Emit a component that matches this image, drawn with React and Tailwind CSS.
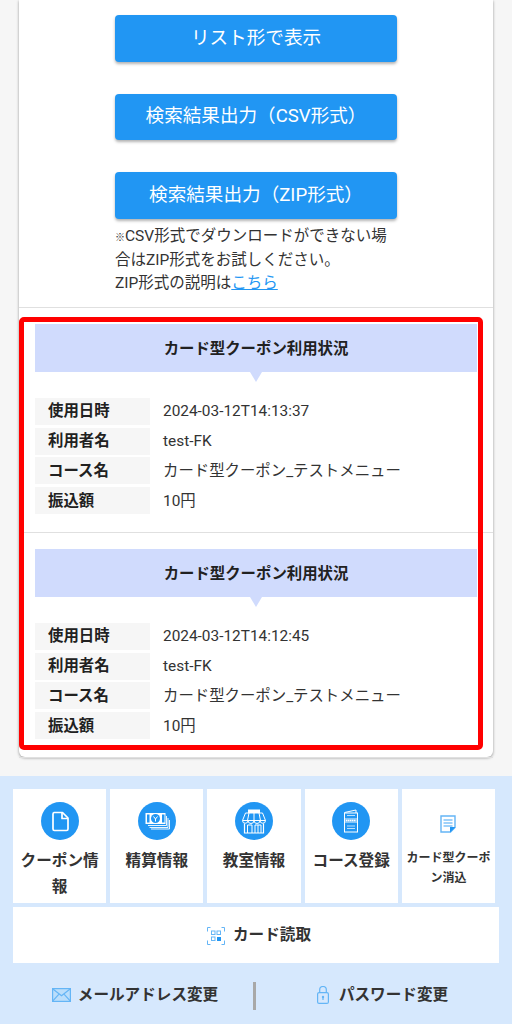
import { Fragment } from "react";

const BUTTONS = ["リスト形で表示", "検索結果出力（CSV形式）", "検索結果出力（ZIP形式）"];

const USAGES = [
  { date: "2024-03-12T14:13:37", user: "test-FK", course: "カード型クーポン_テストメニュー", amount: "10円" },
  { date: "2024-03-12T14:12:45", user: "test-FK", course: "カード型クーポン_テストメニュー", amount: "10円" },
];

function FileIcon() {
  return (
    <svg viewBox="0 0 38 38" className="w-full h-full" fill="none" stroke="#fff" strokeWidth="1.7" strokeLinejoin="round">
      <path d="M13 10.5h8.5l5.5 5.5v11a1.5 1.5 0 0 1-1.5 1.5h-12a1.5 1.5 0 0 1-1.5-1.5V12a1.5 1.5 0 0 1 1.5-1.5z" />
      <path d="M21 10.5v6h6" />
    </svg>
  );
}

function MoneyIcon() {
  return (
    <svg viewBox="0 0 38 38" className="w-full h-full" fill="none" stroke="#fff">
      <rect x="7.5" y="11" width="20" height="11" fill="#fff" stroke="none" />
      <ellipse cx="17.5" cy="16.5" rx="4.5" ry="4.5" fill="#2196f3" stroke="none" />
      <path d="M15.5 14.5l2 2.5 2-2.5M17.5 17v2.5" stroke="#fff" strokeWidth="1" />
      <rect x="9" y="12.5" width="2.5" height="8" fill="#2196f3" stroke="none" />
      <rect x="24" y="12.5" width="2.5" height="8" fill="#2196f3" stroke="none" />
      <path d="M28.5 14v9.5H10M30 16v9.5H11.5M31.5 18v9H13" strokeWidth="0.9" />
    </svg>
  );
}

function ShopIcon() {
  return (
    <svg viewBox="0 0 38 38" className="w-full h-full" fill="none" stroke="#fff" strokeWidth="1">
      <rect x="13" y="7.5" width="12" height="3.5" fill="#fff" stroke="none" />
      <path d="M10.5 11h17l3 7.5h-23z" />
      <path d="M14 11l-1.5 7.5M19 11v7.5M24 11l1.5 7.5" />
      <path d="M7.5 18.5a2.7 2.7 0 0 0 5.5 0 2.8 2.8 0 0 0 6 0 2.8 2.8 0 0 0 6 0 2.7 2.7 0 0 0 5.5 0" />
      <path d="M9.5 21.5V31h19v-9.5" strokeWidth="1.2" />
      <path d="M12.5 31v-8h4.5v8M20 31v-8h6v8M23 23v8" />
    </svg>
  );
}

function MenuIcon() {
  return (
    <svg viewBox="0 0 38 38" className="w-full h-full" fill="none" stroke="#fff" strokeWidth="1">
      <path d="M12.5 10.5l11.5-2.5v3" />
      <rect x="12.5" y="11" width="13" height="19" />
      <rect x="12.5" y="16" width="13" height="5" fill="#fff" fillOpacity="0.45" stroke="none" />
      <path d="M14 18.5h10" strokeWidth="1.4" strokeDasharray="1.4 .6" />
      <path d="M15 13.5h8M15 24h8M15 26.5h8" strokeWidth="0.7" />
    </svg>
  );
}

function NoteIcon() {
  return (
    <svg viewBox="0 0 16 18" className="w-[16px] h-[18px]" fill="none" stroke="#64b5f6" strokeWidth="1.4">
      <path d="M1 1h14v11.5L10.5 17H1z" />
      <path d="M3.5 5h9M3.5 8h9M3.5 11h9" stroke="#42a5f5" strokeWidth="1.1" />
      <path d="M10 17.5v-5.5h5.5z" fill="#2196f3" stroke="none" />
    </svg>
  );
}

function CardScanIcon() {
  return (
    <svg viewBox="0 0 18 18" className="w-[18px] h-[18px]" fill="none" stroke="#64b5f6" strokeWidth="1">
      <path d="M3.5.5h-3v4M14.5.5h3v4M.5 13.5v4h3M17.5 13.5v4h-3" />
      <rect x="4.5" y="4" width="3.5" height="3.5" />
      <rect x="10" y="4" width="3.5" height="3.5" />
      <rect x="4.5" y="10" width="3.5" height="3.5" />
      <rect x="10" y="10" width="4" height="4" fill="#2196f3" stroke="none" />
    </svg>
  );
}

function MailIcon() {
  return (
    <svg viewBox="0 0 19 14" className="w-[19px] h-[14px]" fill="#bbdefb" stroke="#64b5f6" strokeWidth="1.2">
      <rect x="0.6" y="0.6" width="17.8" height="12.8" />
      <path d="M.6.8l8.9 7 8.9-7M.6 13.2l6.4-7M18.4 13.2l-6.4-7" fill="none" />
    </svg>
  );
}

function LockIcon() {
  return (
    <svg viewBox="0 0 12 18" className="w-[12px] h-[18px]" fill="none" stroke="#64b5f6" strokeWidth="1.2">
      <rect x="0.6" y="6.6" width="10.8" height="10.8" rx="1.5" />
      <path d="M2.7 6.5V3.8a3.3 3.3 0 0 1 6.6 0v2.7" />
      <circle cx="6" cy="11" r="1.2" fill="#64b5f6" stroke="none" />
      <path d="M6 11v3" />
    </svg>
  );
}

function Tile({ icon, label }) {
  return (
    <div className="bg-white h-[114px] flex flex-col items-center pt-[13px]">
      <div className="w-[38px] h-[38px] rounded-full bg-[#2196f3] shrink-0">{icon}</div>
      <p className="mt-[8px] text-[15.6px] leading-[26px] font-bold text-[#333] text-center">{label}</p>
    </div>
  );
}

function Usage({ usage }) {
  const rows = [
    ["使用日時", usage.date],
    ["利用者名", usage.user],
    ["コース名", usage.course],
    ["振込額", usage.amount],
  ];

  return (
    <div className="border-b border-[#e0e0e0] px-[16px] pt-[16px] h-[225px]">
      {/* header with small arrow */}
      <div className="relative h-[48px] pt-[3px] bg-[#d0dbfd] flex items-center justify-center text-[15.4px] font-bold text-[#212121]">
        カード型クーポン利用状況
        <span className="absolute left-1/2 -ml-[6px] top-full border-x-[6px] border-x-transparent border-t-[10px] border-t-[#d0dbfd]" />
      </div>

      <div className="mt-[26px] grid grid-cols-[115px_1fr] gap-y-[2.7px] text-[15.4px] text-[#333]">
        {rows.map(([label, value]) => (
          <Fragment key={label}>
            <div className="h-[27px] bg-[#f6f6f6] pl-[13px] pt-[1px] flex items-center font-bold text-[#212121]">{label}</div>
            <div className="pl-[13px] pt-[1px] flex items-center">{value}</div>
          </Fragment>
        ))}
      </div>
    </div>
  );
}

export default function App() {
  return (
    <div className="h-[1024px] overflow-hidden bg-[#f6f6f6] font-['Roboto','Noto_Sans_CJK_JP',sans-serif]">
      {/* main card */}
      <div className="relative mx-[19px] h-[757px] bg-white rounded-b-[6px] shadow-[0_1px_3px_rgba(0,0,0,0.4)]">
        <div className="h-[308px] border-b border-[#e0e0e0] pt-[15px] flex flex-col items-center">
          <div className="w-[282px] flex flex-col gap-[32px]">
            {BUTTONS.map((label) => (
              <button
                key={label}
                className="h-[46.5px] rounded-[4px] bg-[#2196f3] text-white text-[18.6px] pt-[1px] shadow-[0_2px_3px_rgba(0,0,0,0.3)]"
              >
                {label}
              </button>
            ))}
          </div>
          <p className="w-[282px] mt-[6px] text-[15.5px] leading-[23px] text-[#333]">
            <span className="inline-block w-[10px] text-[10px] font-bold">※</span>CSV形式でダウンロードができない場
            <br />
            合はZIP形式をお試しください。
            <br />
            ZIP形式の説明は<a className="text-[#2196f3] underline">こちら</a>
          </p>
        </div>

        {USAGES.map((usage) => (
          <Usage key={usage.date} usage={usage} />
        ))}

        {/* red highlight over the usage list */}
        <div className="absolute left-0 top-[317px] w-[464px] h-[433px] border-[5px] border-[#ff0000] rounded-[5px] pointer-events-none" />
      </div>

      {/* footer menu */}
      <div className="mt-[19px] h-[248px] bg-[#d6e8fd] pt-[13px] px-[13px]">
        <div className="w-[482px] grid grid-cols-5 gap-[4px]">
          <Tile icon={<FileIcon />} label="クーポン情報" />
          <Tile icon={<MoneyIcon />} label="精算情報" />
          <Tile icon={<ShopIcon />} label="教室情報" />
          <Tile icon={<MenuIcon />} label="コース登録" />
          <div className="bg-white h-[114px] flex flex-col items-center pt-[26px]">
            <NoteIcon />
            <p className="mt-[16px] text-[12px] leading-[19.5px] font-bold text-[#333] text-center">カード型クーポン消込</p>
          </div>
        </div>

        <div className="mt-[4px] w-[486px] h-[56px] bg-white pl-[6px] pt-[2px] flex items-center justify-center gap-[8px]">
          <CardScanIcon />
          <span className="text-[15.6px] font-bold text-[#333]">カード読取</span>
        </div>

        <div className="mt-[18px] w-[486px] h-[29px] flex items-center">
          <div className="w-[240px] pl-[4px] flex items-center justify-center gap-[7px]">
            <MailIcon />
            <span className="text-[15.6px] font-bold text-[#333]">メールアドレス変更</span>
          </div>
          <div className="w-[3px] h-[28px] bg-[#a8a8a8]" />
          <div className="flex-1 pl-[10px] flex items-center justify-center gap-[10px]">
            <LockIcon />
            <span className="text-[15.6px] font-bold text-[#333]">パスワード変更</span>
          </div>
        </div>
      </div>
    </div>
  );
}
